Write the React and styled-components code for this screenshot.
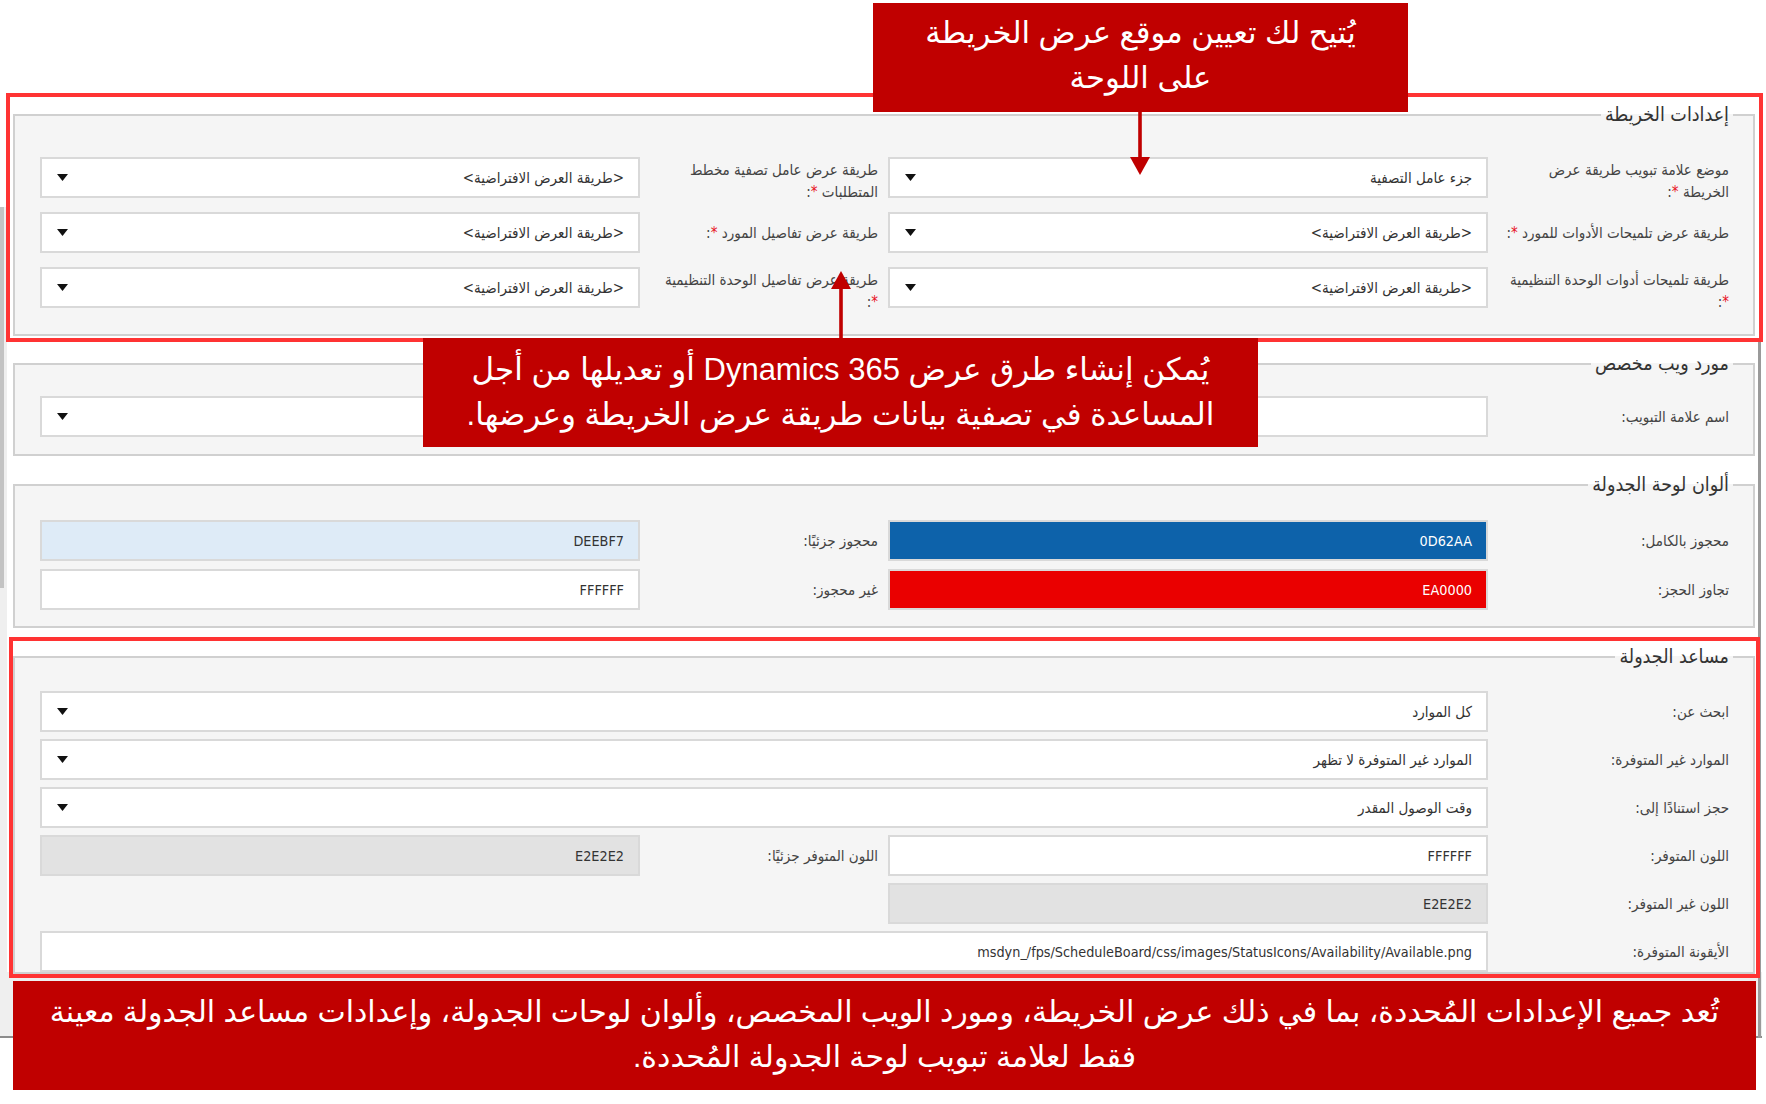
import React from 'react';
import styled, { createGlobalStyle } from 'styled-components';

const FORM_FONT = `"DejaVu Sans Condensed", "DejaVu Sans", sans-serif`;
const CALLOUT_FONT = `"Liberation Sans", "DejaVu Sans", sans-serif`;

const GlobalStyle = createGlobalStyle`
  html, body { margin: 0; padding: 0; background: #ffffff; }
  body { width: 1766px; height: 1104px; overflow: hidden; }
  *, *::before, *::after { box-sizing: border-box; }
`;

const Page = styled.div`
  position: relative;
  z-index: 0;
  width: 1766px;
  height: 1104px;
  padding-top: 93px;
  background: #ffffff;
  font-family: ${FORM_FONT};
  overflow: hidden;
`;

/* window chrome behind the form */
const ScrollTrack = styled.div`
  position: absolute;
  z-index: -1;
  left: 0;
  top: 207px;
  width: 7px;
  height: 829px;
  background: #efefef;
`;
const ScrollThumb = styled.div`
  position: absolute;
  z-index: -1;
  left: 0;
  top: 207px;
  width: 4px;
  height: 381px;
  background: #c3c3c3;
`;
const WindowLower = styled.div`
  position: absolute;
  z-index: -1;
  left: 0;
  top: 972px;
  width: 1762px;
  height: 66px;
  background: #efefef;
  border-bottom: 2px solid #8c8c8c;
`;
const WindowEdge = styled.div`
  position: absolute;
  z-index: -1;
  left: 1758px;
  top: 93px;
  width: 3px;
  height: 945px;
  background: #9a9a9a;
`;

const RedFrame = styled.div`
  margin-left: ${p => p.$x}px;
  margin-top: ${p => p.$mt || 0}px;
  width: ${p => p.$w}px;
  border: 4px solid #ff3333;
  padding: ${p => p.$pad};
  background: #ffffff;
`;

const Fieldset = styled.fieldset`
  direction: rtl;
  margin: ${p => p.$mt || 0}px 0 0 ${p => p.$ml || 0}px;
  width: 1742px;
  min-width: 0;
  border: 2px solid #d0d0d0;
  background: #f5f5f5;
  padding: ${p => p.$pt}px 24px ${p => p.$pb}px 25px;
`;

const Legend = styled.legend`
  font-family: ${FORM_FONT};
  font-size: 19.5px;
  line-height: 22px;
  color: #333333;
  padding: 0 4px;
  margin-right: -4px;
`;

const Grid = styled.div`
  display: grid;
  grid-template-columns: 231px 1fr 228px 1fr;
  grid-auto-rows: 41px;
  column-gap: 10px;
  row-gap: ${p => p.$gap}px;
`;

const Label = styled.div`
  grid-column: ${p => (p.$side === 'left' ? 3 : 1)};
  align-self: ${p => (p.$multi ? 'start' : 'center')};
  padding-top: ${p => (p.$multi ? 2 : 0)}px;
  font-size: 15px;
  line-height: 22px;
  color: #444444;
  white-space: nowrap;
`;

const Req = styled.span`
  color: #e81123;
`;

const Field = styled.div`
  grid-column: ${p => (p.$wide ? '2 / -1' : p.$side === 'left' ? 4 : 2)};
  display: flex;
  align-items: center;
  justify-content: space-between;
  height: 41px;
  padding: 0 14px 0 15px;
  border: 2px solid #d9d9d9;
  background: ${p => p.$bg || '#ffffff'};
  color: ${p => p.$fg || '#333333'};
  white-space: nowrap;
`;

const Value = styled.span`
  font-size: ${p => (p.$latin ? 14.3 : 15)}px;
  line-height: 20px;
`;

const Caret = () => (
  <svg width="11" height="7" viewBox="0 0 11 7" aria-hidden="true">
    <polygon points="0,0 11,0 5.5,7" fill="#111111" />
  </svg>
);

const Callout = styled.div`
  position: absolute;
  left: ${p => p.$x}px;
  top: ${p => p.$y}px;
  width: ${p => p.$w}px;
  height: 109px;
  padding-top: ${p => p.$pt}px;
  background: #c00000;
  color: #ffffff;
  direction: rtl;
  text-align: center;
  font-family: ${CALLOUT_FONT};
  font-size: ${p => p.$size}px;
  line-height: 45px;
`;

const Line = styled.div`
  white-space: nowrap;
`;

const Arrow = styled.svg`
  position: absolute;
  left: ${p => p.$x}px;
  top: ${p => p.$y}px;
`;

const FieldLabel = ({ side, lines, req }) => {
  const multi = lines.length > 1;
  return (
    <Label $side={side} $multi={multi}>
      {lines.map((l, i) => (
        <div key={i}>
          {l}
          {i === lines.length - 1 && (
            <>
              {req && (
                <>
                  {l ? ' ' : ''}
                  <Req>*</Req>
                </>
              )}
              :
            </>
          )}
        </div>
      ))}
    </Label>
  );
};

const SelectField = ({ side, wide, value }) => (
  <Field $side={side} $wide={wide}>
    <Value>{value}</Value>
    <Caret />
  </Field>
);

const TextField = ({ side, wide, value, bg, fg }) => (
  <Field $side={side} $wide={wide} $bg={bg} $fg={fg}>
    <Value $latin>{value}</Value>
  </Field>
);

const DEF = '<طريقة العرض الافتراضية>';

export default function App() {
  return (
    <>
      <GlobalStyle />
      <Page>
        <ScrollTrack />
        <ScrollThumb />
        <WindowLower />
        <WindowEdge />

        <RedFrame $x={6} $w={1757} $pad="7px 4px 2px 3px">
          <Fieldset $pt={31} $pb={26}>
            <Legend>إعدادات الخريطة</Legend>
            <Grid $gap={14}>
              <FieldLabel side="right" lines={['موضع علامة تبويب طريقة عرض', 'الخريطة']} req />
              <SelectField side="right" value="جزء عامل التصفية" />
              <FieldLabel side="left" lines={['طريقة عرض عامل تصفية مخطط', 'المتطلبات']} req />
              <SelectField side="left" value={DEF} />

              <FieldLabel side="right" lines={['طريقة عرض تلميحات الأدوات للمورد']} req />
              <SelectField side="right" value={DEF} />
              <FieldLabel side="left" lines={['طريقة عرض تفاصيل المورد']} req />
              <SelectField side="left" value={DEF} />

              <FieldLabel side="right" lines={['طريقة تلميحات أدوات الوحدة التنظيمية', '']} req />
              <SelectField side="right" value={DEF} />
              <FieldLabel side="left" lines={['طريقة عرض تفاصيل الوحدة التنظيمية', '']} req />
              <SelectField side="left" value={DEF} />
            </Grid>
          </Fieldset>
        </RedFrame>

        <Fieldset $ml={13} $mt={11} $pt={21} $pb={17}>
          <Legend>مورد ويب مخصص</Legend>
          <Grid $gap={8}>
            <FieldLabel side="right" lines={['اسم علامة التبويب']} />
            <SelectField wide value="" />
          </Grid>
        </Fieldset>

        <Fieldset $ml={13} $mt={18} $pt={24} $pb={16}>
          <Legend>ألوان لوحة الجدولة</Legend>
          <Grid $gap={8}>
            <FieldLabel side="right" lines={['محجوز بالكامل']} />
            <TextField side="right" value="0D62AA" bg="#0d62aa" fg="#ffffff" />
            <FieldLabel side="left" lines={['محجوز جزئيًا']} />
            <TextField side="left" value="DEEBF7" bg="#deebf7" />

            <FieldLabel side="right" lines={['تجاوز الحجز']} />
            <TextField side="right" value="EA0000" bg="#ea0000" fg="#ffffff" />
            <FieldLabel side="left" lines={['غير محجوز']} />
            <TextField side="left" value="FFFFFF" />
          </Grid>
        </Fieldset>

        <RedFrame $x={9} $mt={9} $w={1751} $pad="5px 1px 0 0">
          <Fieldset $pt={23} $pb={0}>
            <Legend>مساعد الجدولة</Legend>
            <Grid $gap={7}>
              <FieldLabel side="right" lines={['ابحث عن']} />
              <SelectField wide value="كل الموارد" />

              <FieldLabel side="right" lines={['الموارد غير المتوفرة']} />
              <SelectField wide value="الموارد غير المتوفرة لا تظهر" />

              <FieldLabel side="right" lines={['حجز استنادًا إلى']} />
              <SelectField wide value="وقت الوصول المقدر" />

              <FieldLabel side="right" lines={['اللون المتوفر']} />
              <TextField side="right" value="FFFFFF" />
              <FieldLabel side="left" lines={['اللون المتوفر جزئيًا']} />
              <TextField side="left" value="E2E2E2" bg="#e2e2e2" />

              <FieldLabel side="right" lines={['اللون غير المتوفر']} />
              <TextField side="right" value="E2E2E2" bg="#e2e2e2" />

              <FieldLabel side="right" lines={['الأيقونة المتوفرة']} />
              <TextField wide value="msdyn_/fps/ScheduleBoard/css/images/StatusIcons/Availability/Available.png" />
            </Grid>
          </Fieldset>
        </RedFrame>

        <Callout $x={873} $y={3} $w={535} $size={30.7} $pt={7}>
          <Line>يُتيح لك تعيين موقع عرض الخريطة</Line>
          <Line>على اللوحة</Line>
        </Callout>
        <Arrow $x={1129} $y={112} width="22" height="64" viewBox="0 0 22 64">
          <rect x="9.2" y="0" width="3.6" height="47" fill="#c00000" />
          <polygon points="1,45 21,45 11,63" fill="#c00000" />
        </Arrow>

        <Callout $x={423} $y={338} $w={835} $size={31} $pt={9}>
          <Line>يُمكن إنشاء طرق عرض Dynamics 365 أو تعديلها من أجل</Line>
          <Line>المساعدة في تصفية بيانات طريقة عرض الخريطة وعرضها.</Line>
        </Callout>
        <Arrow $x={830} $y={271} width="22" height="68" viewBox="0 0 22 68">
          <polygon points="11,0 21,18 1,18" fill="#c00000" />
          <rect x="9.2" y="16" width="3.6" height="52" fill="#c00000" />
        </Arrow>

        <Callout $x={13} $y={981} $w={1743} $size={30} $pt={8}>
          <Line>تُعد جميع الإعدادات المُحددة، بما في ذلك عرض الخريطة، ومورد الويب المخصص، وألوان لوحات الجدولة، وإعدادات مساعد الجدولة معينة</Line>
          <Line>فقط لعلامة تبويب لوحة الجدولة المُحددة.</Line>
        </Callout>
      </Page>
    </>
  );
}
